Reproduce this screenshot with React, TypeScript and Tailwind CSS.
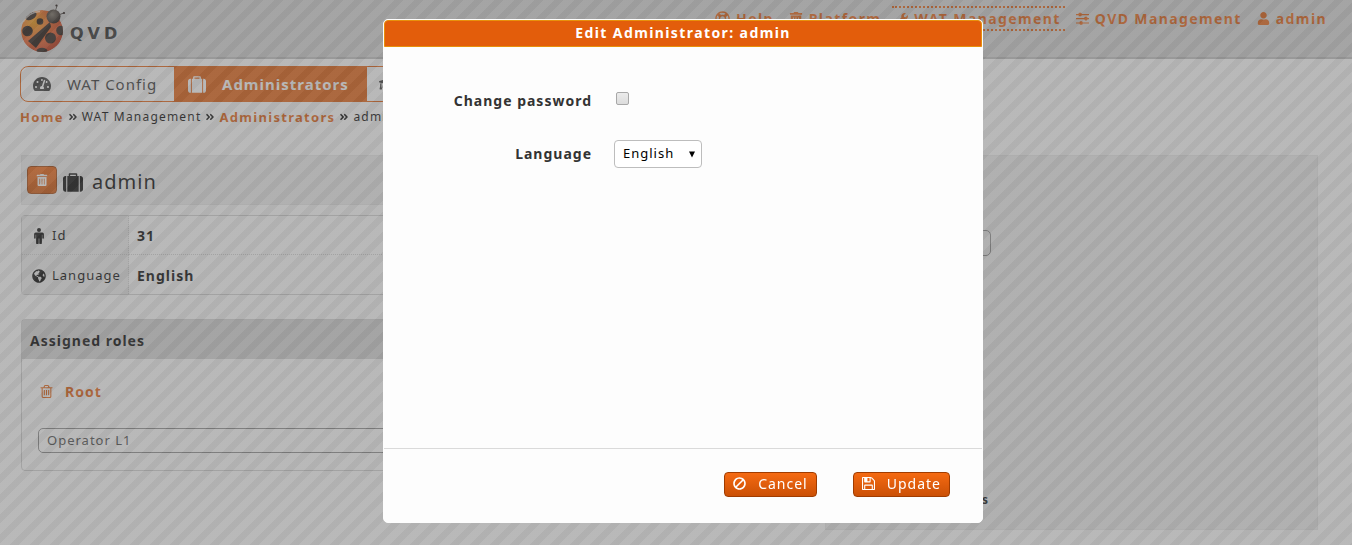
import type { ReactNode } from "react";
import {
  FaTachometerAlt,
  FaGlobeAmericas,
  FaBan,
  FaAngleDoubleRight,
  FaRegLifeRing,
  FaTrashAlt,
  FaWrench,
  FaUser,
  FaGraduationCap,
} from "react-icons/fa";

function TrashIcon({ className }: { className: string }) {
  return (
    <svg viewBox="128 128 1536 1536" fill="currentColor" className={className} aria-hidden="true">
      <path d="M704 736v576q0 14-9 23t-23 9h-64q-14 0-23-9t-9-23v-576q0-14 9-23t23-9h64q14 0 23 9t9 23zm256 0v576q0 14-9 23t-23 9h-64q-14 0-23-9t-9-23v-576q0-14 9-23t23-9h64q14 0 23 9t9 23zm256 0v576q0 14-9 23t-23 9h-64q-14 0-23-9t-9-23v-576q0-14 9-23t23-9h64q14 0 23 9t9 23zm128 724v-948h-896v948q0 22 7 40.5t14.5 27 10.5 8.5h832q3 0 10.5-8.5t14.5-27 7-40.5zm-672-1076h448l-48-117q-7-9-17-11h-317q-10 2-17 11zm928 32v64q0 14-9 23t-23 9h-96v948q0 83-47 143.5t-113 60.5h-832q-66 0-113-58.5t-47-141.5v-952h-96q-14 0-23-9t-9-23v-64q0-14 9-23t23-9h309l70-167q15-37 54-63t79-26h320q40 0 79 26t54 63l70 167h309q14 0 23 9t9 23z" />
    </svg>
  );
}

function SuitcaseIcon({ className }: { className: string }) {
  return (
    <svg viewBox="0 0 1792 1664" fill="currentColor" className={className} aria-hidden="true">
      <path d="M640 256h512v-128h-512v128zm-352 0v1408h-64q-92 0-158-66t-66-158v-960q0-92 66-158t158-66h64zm1120 0v1408h-1024v-1408h128v-160q0-40 28-68t68-28h576q40 0 68 28t28 68v160h128zm384 224v960q0 92-66 158t-158 66h-64v-1408h64q92 0 158 66t66 158z" />
    </svg>
  );
}

function MaleIcon({ className }: { className: string }) {
  return (
    <svg viewBox="0 0 10 16" fill="currentColor" className={className} aria-hidden="true">
      <circle cx="5" cy="2" r="2" />
      <path d="M1.800 4.400h6.400A1.700 1.700 0 0 1 9.900 6.100V10a.8.8 0 0 1-1.600 0V6.800h-.4V15a.95.95 0 0 1-2.600 0v-4.500h-.6V15a.95.95 0 0 1-2.600 0V6.800h-.4V10a.8.8 0 0 1-1.600 0V6.100A1.700 1.700 0 0 1 1.800 4.400z" />
    </svg>
  );
}

function FloppyIcon({ className }: { className: string }) {
  return (
    <svg viewBox="0 128 1536 1536" fill="currentColor" className={className} aria-hidden="true">
      <path d="M384 1536h768v-384h-768v384zM1280 1536h128v-896q0-14-10-38.5t-20-34.5l-281-281q-10-10-34-20t-39-10v416q0 40-28 68t-68 28h-576q-40 0-68-28t-28-68v-416h-128v1280h128v-416q0-40 28-68t68-28h832q40 0 68 28t28 68v416zM896 608v-320q0-13-9.5-22.5t-22.5-9.5h-192q-13 0-22.5 9.5t-9.5 22.5v320q0 13 9.5 22.5t22.5 9.5h192q13 0 22.5-9.5t9.5-22.5zM1536 640v928q0 40-28 68t-68 28h-1344q-40 0-68-28t-28-68v-1344q0-40 28-68t68-28h928q40 0 88 20t76 48l280 280q28 28 48 76t20 88z" />
    </svg>
  );
}

function SlidersIcon({ className }: { className: string }) {
  return (
    <svg viewBox="0 0 13 13" fill="currentColor" className={className} aria-hidden="true">
      <path d="M0 2h13v1.2H0zM0 6h13v1.2H0zM0 10.4h13v1.2H0z" />
      <rect x="2.6" y="0.7" width="3" height="3.6" rx="0.8" />
      <rect x="8.4" y="4.8" width="3" height="3.6" rx="0.8" />
      <rect x="3.6" y="9.2" width="3" height="3.6" rx="0.8" />
    </svg>
  );
}

function Ladybug() {
  return (
    <svg viewBox="0 0 50 52" className="h-[52px] w-[50px]" aria-hidden="true">
      <defs>
        <radialGradient id="shell" cx="0.3" cy="0.3" r="0.8">
          <stop offset="0" stopColor="#f09a10" />
          <stop offset="0.55" stopColor="#e2561c" />
          <stop offset="1" stopColor="#b82a10" />
        </radialGradient>
        <radialGradient id="head" cx="0.4" cy="0.35" r="0.7">
          <stop offset="0" stopColor="#6e6558" />
          <stop offset="1" stopColor="#140a06" />
        </radialGradient>
        <clipPath id="body">
          <circle cx="22" cy="31" r="21" />
        </clipPath>
      </defs>
      <path d="M35 12 37 6M38 15l6-2" stroke="#2a211c" strokeWidth="0.8" fill="none" />
      <circle cx="36.500" cy="5.500" r="1.100" fill="#1a100c" />
      <circle cx="44" cy="13" r="1.100" fill="#1a100c" />
      <g clipPath="url(#body)">
        <circle cx="22" cy="31" r="21" fill="url(#shell)" />
        <g fill="#1d100b">
          <path d="M30 22 8 41l8 7 15-21z" />
          <circle cx="7.500" cy="31" r="5.300" />
          <circle cx="20" cy="21.500" r="3.300" />
          <circle cx="30.500" cy="38" r="5.500" />
          <circle cx="41" cy="30.500" r="4.800" />
          <ellipse cx="11" cy="16" rx="6" ry="3.600" transform="rotate(-30 11 16)" />
          <ellipse cx="22" cy="51" rx="5.500" ry="3.200" />
        </g>
        <path d="M3 22Q9 12 20 11.500" stroke="#fff" strokeOpacity="0.6" strokeWidth="1.500" fill="none" />
      </g>
      <circle cx="33.500" cy="16.500" r="7" fill="url(#head)" />
    </svg>
  );
}

function NavItem({ icon, label, active }: { icon: ReactNode; label: string; active?: boolean }) {
  return (
    <a
      href="#"
      className={
        "flex h-[25px] items-center gap-1.5 border-y-2 border-dotted px-1 " +
        (active ? "border-[#e35d0b]" : "border-transparent")
      }
    >
      {icon}
      {label}
    </a>
  );
}

function Page() {
  return (
    <div className="min-h-screen bg-[#fdfdfd]">
      <header className="flex h-[59px] items-start justify-between border-b-2 border-[#bcbcbc] bg-[#d5d5d5] pr-[21px] pl-[20px]">
        <a href="#" className="flex items-center text-[#222]">
          <Ladybug />
          <span className="pt-4 font-['DejaVu_Sans'] text-[16px] leading-4 font-bold tracking-[4px]">QVD</span>
        </a>
        <nav className="flex gap-[7px] pt-1.5 text-[14px] font-bold tracking-widest text-[#e35d0b]">
          <NavItem icon={<FaRegLifeRing className="size-[15px]" />} label="Help" />
          <NavItem icon={<FaTrashAlt className="size-3.5" />} label="Platform" />
          <NavItem icon={<FaWrench className="size-3" />} label="WAT Management" active />
          <NavItem icon={<SlidersIcon className="size-[13px]" />} label="QVD Management" />
          <NavItem icon={<FaUser className="size-[13px]" />} label="admin" />
        </nav>
      </header>

      <nav className="mt-[7px] ml-[20px] flex h-9 w-[520px] overflow-hidden rounded-lg border border-[#e35d0b] text-[15px] text-[#333]">
        <a href="#" className="flex w-[153px] items-center gap-4 pl-3">
          <FaTachometerAlt className="size-[18px]" />
          WAT Config
        </a>
        <a href="#" className="flex w-[193px] items-center gap-4 border-r border-[#e35d0b] bg-[#e35d0b] pl-3.5 font-bold text-[#fdfdfd]">
          <SuitcaseIcon className="h-[17px] w-[18px]" />
          Administrators
        </a>
        <a href="#" aria-label="Roles" className="flex items-center pl-3">
          <FaGraduationCap className="size-[18px]" />
        </a>
      </nav>

      <div className="flex items-center gap-1 pt-1.5 pl-5 text-[12px] leading-[18px] tracking-widest text-black">
        <a href="#" className="text-[13px] font-bold tracking-widest text-[#e35d0b]">Home</a>
        <FaAngleDoubleRight className="size-2.5" />
        <span>WAT Management</span>
        <FaAngleDoubleRight className="size-2.5" />
        <a href="#" className="text-[13px] font-bold tracking-widest text-[#e35d0b]">Administrators</a>
        <FaAngleDoubleRight className="size-2.5" />
        <span>admin</span>
      </div>

      <main className="flex gap-5 pt-[29px] pr-[34px] pl-[21px] text-[14px] text-black">
        <div className="flex-1">
          <div className="flex h-[50px] items-center gap-1.5 border border-[#e6e6e6] bg-[#ededed] pl-[5px]">
            <button aria-label="Delete" className="flex h-7 w-[30px] items-center justify-center rounded border border-[#a03c00] bg-linear-to-b from-[#f2640f] to-[#cf5205] text-[#fdfdfd]">
              <FaTrashAlt className="size-3" />
            </button>
            <SuitcaseIcon className="mt-1 h-[19px] w-5" />
            <h1 className="pt-1 pl-[3px] text-[20px]">admin</h1>
          </div>

          <table className="mt-2.5 w-full border-separate border-spacing-0 rounded border border-[#d0d0d0]">
            <tbody>
              <tr className="h-[39px]">
                <th className="w-[107px] border-r border-b border-dotted border-[#d0d0d0] bg-[#ededed] pt-0.5 pl-2.5 text-left text-[13px] font-normal">
                  <span className="flex items-center gap-1.5">
                    <MaleIcon className="h-4 w-3.5" />
                    Id
                  </span>
                </th>
                <td className="border-b border-dotted border-[#d0d0d0] pl-2 font-bold">31</td>
              </tr>
              <tr className="h-[39px]">
                <th className="border-r border-dotted border-[#d0d0d0] bg-[#ededed] pt-0.5 pl-2.5 text-left text-[13px] font-normal">
                  <span className="flex items-center gap-1.5">
                    <FaGlobeAmericas className="size-3.5" />
                    Language
                  </span>
                </th>
                <td className="pt-0.5 pl-2 font-bold">English</td>
              </tr>
            </tbody>
          </table>

          <section className="mt-6 rounded border border-[#d0d0d0]">
            <h2 className="h-[39px] bg-[#d5d5d5] pl-2 leading-[42px] font-bold">Assigned roles</h2>
            <div className="px-4 pt-[19px] pb-[17px]">
              <div className="flex h-[26px] items-center gap-3 pl-0.5 font-bold text-[#e35d0b]">
                <TrashIcon className="size-[13px]" />
                <a href="#">Root</a>
              </div>
              <select aria-label="Role" className="mt-6 block h-[25px] w-full appearance-none rounded-[5px] border border-[#888] pl-2 text-[13px] text-[#444]">
                <option>Operator L1</option>
              </select>
            </div>
          </section>
        </div>

        <aside className="flex h-[375px] w-[493px] flex-col justify-between border border-[#e6e6e6] bg-[#ededed] pt-[74px] pb-5">
          <input aria-label="Search" className="h-[26px] w-[165px] rounded-[5px] border border-[#888]" />
          <div className="w-[163px] text-right text-[12px] font-bold">s</div>
        </aside>
      </main>
    </div>
  );
}

function EditDialog() {
  return (
    <div
      role="dialog"
      aria-label="Edit Administrator: admin"
      className="flex h-[504px] w-[600px] flex-col rounded-[5px] border border-[#fdfdfd] bg-[#fdfdfd] text-[14px] text-[#333]"
    >
      <h2 className="h-[27px] rounded-t border border-[#e8900c] bg-[#e35d0b] text-center leading-6 font-bold tracking-widest text-white">
        Edit Administrator: admin
      </h2>
      <form className="grid flex-1 grid-cols-[208px_1fr] content-start items-center gap-x-[22px] gap-y-[25px] pt-10">
        <label htmlFor="change" className="text-right leading-7 font-bold">Change password</label>
        <input
          id="change"
          type="checkbox"
          className="mb-1.5 ml-0.5 size-[13px] appearance-none rounded-[2px] border border-[#a8a8a8] bg-linear-to-b from-[#ececec] to-[#dcdcdc]"
        />
        <label htmlFor="language" className="text-right leading-7 font-bold">Language</label>
        <div className="grid w-[88px] items-center">
          <select
            id="language"
            className="col-start-1 row-start-1 h-7 w-full appearance-none rounded border border-[#bdbdbd] bg-white pl-2 text-[13px] text-black"
          >
            <option>English</option>
          </select>
          <svg viewBox="0 0 8 7" className="pointer-events-none col-start-1 row-start-1 mr-1.5 h-[7px] w-2 justify-self-end" aria-hidden="true">
            <path d="M1 0.500h6l-3 6z" fill="#000" />
          </svg>
        </div>
      </form>
      <footer className="flex h-[74px] gap-9 border-t border-[#dadada] pt-[23px] pr-8 text-white">
        <button className="ml-auto flex h-[25px] items-center gap-3 rounded border border-[#a03c00] bg-linear-to-b from-[#f56a12] to-[#cb5006] px-2 pb-0.5">
          <FaBan className="size-[13px] -scale-x-100" />
          Cancel
        </button>
        <button className="flex h-[25px] items-center gap-3 rounded border border-[#a03c00] bg-linear-to-b from-[#f56a12] to-[#cb5006] px-2 pb-0.5">
          <FloppyIcon className="size-[13px]" />
          Update
        </button>
      </footer>
    </div>
  );
}

export default function App() {
  return (
    <div className="font-['Noto_Sans',sans-serif] tracking-[1px]">
      <Page />
      <div className="fixed inset-0 flex items-start justify-center bg-[linear-gradient(135deg,rgb(101_101_101/0.5)_10%,rgb(117_117_117/0.5)_10%_37.5%,rgb(101_101_101/0.5)_37.5%_60%,rgb(117_117_117/0.5)_60%_87.5%,rgb(101_101_101/0.5)_87.5%)] bg-[size:20px_20px] pt-[19px] pl-[14px]">
        <EditDialog />
      </div>
    </div>
  );
}
